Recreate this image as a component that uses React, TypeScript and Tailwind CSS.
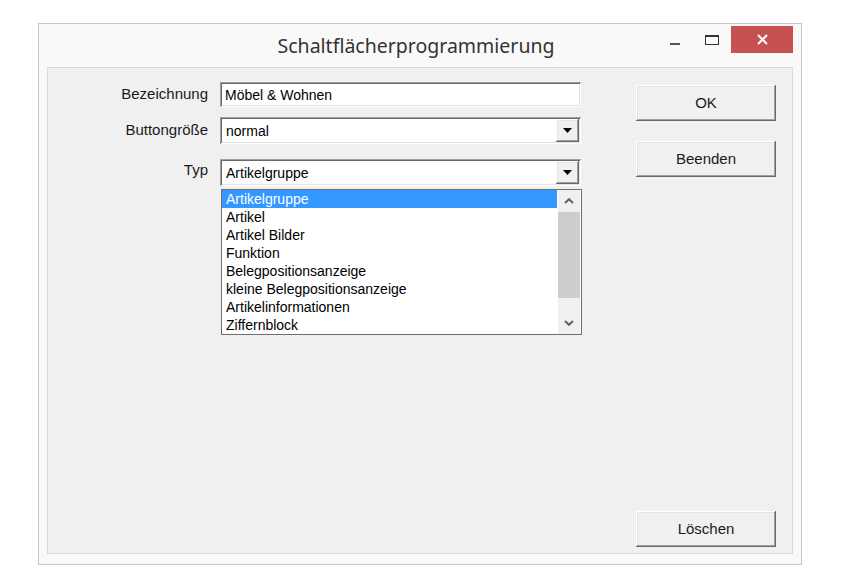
import React from 'react';

const typOptions = [
  'Artikelgruppe',
  'Artikel',
  'Artikel Bilder',
  'Funktion',
  'Belegpositionsanzeige',
  'kleine Belegpositionsanzeige',
  'Artikelinformationen',
  'Ziffernblock',
];

// classic 3D bevels
const raised =
  'shadow-[inset_-1px_-1px_#696969,inset_1px_1px_#ffffff,inset_-2px_-2px_#a0a0a0,inset_2px_2px_#e3e3e3]';
const sunken =
  'shadow-[inset_1px_1px_#a0a0a0,inset_-1px_-1px_#ffffff,inset_2px_2px_#696969,inset_-2px_-2px_#e3e3e3]';

function DropArrow() {
  return (
    <div className={`w-[23px] h-[23px] bg-[#f0f0f0] flex items-center justify-center ${raised}`}>
      <svg width="9" height="5" viewBox="0 0 9 5">
        <path d="M0 0h9L4.5 5z" fill="#000" />
      </svg>
    </div>
  );
}

function ComboBox({ value }: { value: string }) {
  return (
    <div className={`w-[361px] h-[27px] bg-white flex items-center justify-between pl-[6px] pr-[2px] ${sunken}`}>
      <span className="text-[14px] text-black pt-[2px]">{value}</span>
      <DropArrow />
    </div>
  );
}

function Chevron({ up }: { up?: boolean }) {
  return (
    <svg width="10" height="6" viewBox="0 0 10 6">
      <path
        d={up ? 'M1 5L5 1.2L9 5' : 'M1 1L5 4.8L9 1'}
        fill="none"
        stroke="#606060"
        strokeWidth="2"
      />
    </svg>
  );
}

function ListBox() {
  return (
    <div className="absolute left-[173px] top-full mt-[3px] w-[361px] h-[146px] bg-white border border-[#6e6e6e] flex">
      <div className="flex-1 flex flex-col">
        {typOptions.map((opt, i) => (
          <div
            key={opt}
            className={`h-[18px] leading-[18px] pl-[4px] text-[14px] whitespace-nowrap ${
              i === 0 ? 'bg-[#3399ff] text-white mr-[1px]' : 'text-black'
            }`}
          >
            {opt}
          </div>
        ))}
      </div>
      <div className="w-[22px] bg-[#f0f0f0] flex flex-col mr-[1px]">
        <div className="h-[22px] flex items-center justify-center">
          <Chevron up />
        </div>
        <div className="h-[86px] bg-[#cdcdcd]" />
        <div className="flex-1" />
        <div className="h-[22px] flex items-center justify-center">
          <Chevron />
        </div>
      </div>
    </div>
  );
}

function Button({ label, className = '' }: { label: string; className?: string }) {
  return (
    <button
      className={`w-[140px] h-[36px] bg-[#f0f0f0] text-[15px] text-[#1a1a1a] flex items-center justify-center ${raised} ${className}`}
    >
      {label}
    </button>
  );
}

export default function App() {
  return (
    <div
      className="w-[842px] h-[581px] bg-white pt-[23px] pl-[38px]"
      style={{ fontFamily: '"Liberation Sans", Arial, sans-serif' }}
    >
      <div className="w-[764px] h-[542px] border border-[#c6c6c6] bg-[#f9f9f9] flex flex-col">
        {/* title bar */}
        <div className="h-[43px] grid grid-cols-[1fr_auto_1fr] pr-[8px]">
          <div />
          <div
            className="text-[19.5px] text-[#333] pt-[7px]"
            style={{ fontFamily: '"Noto Sans", "Open Sans", sans-serif' }}
          >
            Schaltflächerprogrammierung
          </div>
          <div className="flex justify-end items-start pt-[2px]">
            <div className="w-[28px] h-[27px] mr-[9px] flex justify-center pt-[17px]">
              <div className="w-[10px] h-[2px] bg-[#555]" />
            </div>
            <div className="w-[28px] h-[27px] mr-[5px] flex justify-center pt-[9px]">
              <div className="w-[14px] h-[10px] border border-t-2 border-[#333]" />
            </div>
            <div className="w-[62px] h-[27px] bg-[#c75050] flex items-center justify-center">
              <svg width="11" height="11" viewBox="0 0 11 11">
                <path d="M1 1L10 10M10 1L1 10" stroke="#fff" strokeWidth="2" />
              </svg>
            </div>
          </div>
        </div>

        {/* client area */}
        <div className="mx-[8px] mb-[10px] flex-1 border border-[#d9d9d9] bg-[#f0f0f0] flex">
          <div className="flex flex-col pt-[14px]">
            <div className="flex items-center">
              <div className="w-[160px] text-right text-[15px] text-[#1a1a1a]">Bezeichnung</div>
              <div className={`ml-[12px] w-[361px] h-[25px] bg-white flex items-center pl-[5px] ${sunken}`}>
                <span className="text-[14px] text-black pt-[1px]">Möbel &amp; Wohnen</span>
              </div>
            </div>
            <div className="flex items-center mt-[10px]">
              <div className="w-[160px] text-right text-[15px] text-[#1a1a1a]">Buttongröße</div>
              <div className="ml-[12px]">
                <ComboBox value="normal" />
              </div>
            </div>
            <div className="flex items-center mt-[15px] relative">
              <div className="w-[160px] text-right text-[15px] text-[#1a1a1a] -mt-[4px]">Typ</div>
              <div className="ml-[12px]">
                <ComboBox value="Artikelgruppe" />
              </div>
              <ListBox />
            </div>
          </div>

          <div className="ml-auto mr-[16px] flex flex-col pt-[17px] pb-[6px]">
            <Button label="OK" />
            <Button label="Beenden" className="mt-[20px]" />
            <Button label="Löschen" className="mt-auto" />
          </div>
        </div>
      </div>
    </div>
  );
}
